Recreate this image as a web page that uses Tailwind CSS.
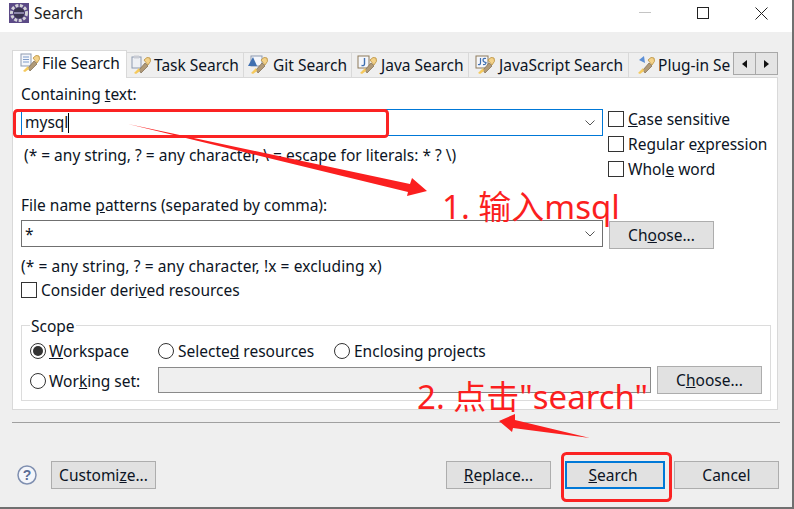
<!DOCTYPE html>
<html lang="en">
<head>
    <meta charset="UTF-8">
    <title>Search</title>
    <script src="https://cdn.jsdelivr.net/npm/@tailwindcss/browser@4"></script>
</head>
<body class="bg-white">
    <svg width="0" height="0" class="absolute">
        <defs>
            <g id="torch">
                <path d="M8 15 L14 8 L17 11 L10 18 Z" fill="#b09a78" stroke="#7d6a4f" stroke-width="0.7"/>
                <path d="M13 5 Q16 1 19 3 Q21 6 17 10 Z" fill="#f3d28a" stroke="#b98f3e" stroke-width="0.8"/>
                <path d="M3 18 L8 13 L9 16 L5 19 Z" fill="#f5c95c"/>
            </g>
        </defs>
    </svg>
    <div class="relative w-[794px] h-[509px] overflow-hidden bg-[#efefef] border-r-2 border-b-2 border-[#707070] text-[15.5px] leading-[20px] text-[#0c1424] font-['Noto_Sans',sans-serif]">
        <!-- title bar -->
        <div class="h-[32px] bg-white flex items-start">
            <svg class="ml-[9px] mt-[3px]" width="20" height="20" viewBox="0 0 20 20">
                <rect width="20" height="20" fill="#5b4a86"/>
                <circle cx="10" cy="10" r="7.5" fill="none" stroke="#d4d4d8" stroke-width="3" stroke-dasharray="3 1.5"/>
                <circle cx="10" cy="10" r="5.5" fill="#3a3550"/>
                <rect x="5" y="9" width="10" height="2" fill="#8a84a8"/>
            </svg>
            <span class="ml-[5px] mt-[3px] text-[#222]">Search</span>
            <div class="ml-auto flex items-start">
                <div class="w-[12px] h-px bg-[#c4c4c4] mt-[12px] mr-[46px]"></div>
                <div class="w-[12px] h-[12px] border border-[#222] mt-[7px] mr-[46px]"></div>
                <svg class="mt-[7px] mr-[24px]" width="13" height="13" viewBox="0 0 13 13"><path d="M0.5 0.5 L12.5 12.5 M12.5 0.5 L0.5 12.5" stroke="#222" stroke-width="1"/></svg>
            </div>
        </div>

        <!-- tabs -->
        <div class="relative z-10 flex items-end h-[45px] pl-[12px]">
            <div class="flex items-center gap-[2px] w-[115px] h-[28px] -mb-px pl-[7px] pb-[3px] bg-white border border-b-0 border-[#d9d9d9]">
                <svg width="20" height="20" viewBox="0 0 20 20"><rect x="1" y="1" width="10" height="12" fill="#f4f6fb" stroke="#8d9ab0"/><path d="M3 4h6M3 6.5h6M3 9h6" stroke="#7f9cc9"/><use href="#torch"/></svg>
                <span>File Search</span>
            </div>
            <div class="flex items-center gap-[3px] w-[117px] h-[26px] -mb-px pl-[4px] border-y border-r border-[#d9d9d9]">
                <svg width="20" height="20" viewBox="0 0 20 20"><rect x="1" y="2" width="9" height="11" fill="#eef0f4" stroke="#8d9ab0"/><rect x="3" y="0.5" width="5" height="3" fill="#c9ccd4"/><use href="#torch"/></svg>
                <span>Task Search</span>
            </div>
            <div class="flex items-center gap-[5px] w-[108px] h-[26px] -mb-px pl-[4px] border-y border-r border-[#d9d9d9]">
                <svg width="20" height="20" viewBox="0 0 20 20"><rect x="3" y="1" width="11" height="10" fill="#f4f6fb" stroke="#8d9ab0"/><path d="M0 11 L5 2 L9 11 Z" fill="#3f6fb0"/><use href="#torch"/></svg>
                <span>Git Search</span>
            </div>
            <div class="flex items-center gap-[4px] w-[117px] h-[26px] -mb-px pl-[5px] border-y border-r border-[#d9d9d9]">
                <svg width="20" height="20" viewBox="0 0 20 20"><rect x="1" y="1" width="11" height="12" fill="#f4f6fb" stroke="#8d7a5a"/><path d="M7.500 3v6q0 2-3 1.500" fill="none" stroke="#3f6fb0" stroke-width="1.400"/><use href="#torch"/></svg>
                <span>Java Search</span>
            </div>
            <div class="flex items-center gap-[4px] w-[160px] h-[26px] -mb-px pl-[6px] border-y border-r border-[#d9d9d9]">
                <svg width="20" height="20" viewBox="0 0 20 20"><rect x="1" y="1" width="12" height="12" fill="#f4f6fb" stroke="#8d7a5a"/><path d="M5.500 3v5q0 2-2.500 1.500M11 3.500Q8 3 8 5t3 2.500q0 2.500-3 2" fill="none" stroke="#3f6fb0" stroke-width="1.200"/><use href="#torch"/></svg>
                <span>JavaScript Search</span>
            </div>
            <div class="flex items-center gap-[3px] w-[104px] h-[26px] -mb-px pl-[6px] border-y border-[#d9d9d9] overflow-hidden whitespace-nowrap">
                <svg class="shrink-0" width="20" height="20" viewBox="0 0 20 20"><path d="M4 5 L9 1 L10 8 Z" fill="#5c8fd6"/><use href="#torch"/></svg>
                <span>Plug-in Se</span>
            </div>
            <div class="flex mb-[2px] h-[23px]">
                <div class="flex items-center justify-center w-[23px] bg-[#e4e4e4] border border-[#a8a8a8]"><svg width="5" height="8" viewBox="0 0 5 8"><path d="M5 0V8L0 4Z" fill="#111"/></svg></div>
                <div class="flex items-center justify-center w-[22px] bg-[#e4e4e4] border border-l-0 border-[#a8a8a8]"><svg width="5" height="8" viewBox="0 0 5 8"><path d="M0 0V8L5 4Z" fill="#111"/></svg></div>
            </div>
        </div>

        <!-- panel -->
        <div class="mx-[12px] w-[766px] h-[333px] bg-white border border-[#d9d9d9] pl-[8px] pr-[6px]">
            <div class="pt-[6px] h-[31px]">Containing <u>t</u>ext:</div>
            <div class="flex h-[86px]">
                <div class="w-[582px]">
                    <div class="h-[27px] border border-[#0078d7] flex items-center justify-between pl-[3px] pr-[7px]">
                        <span class="border-r border-black h-[20px] leading-[19px]">mysql</span>
                        <svg width="10" height="6" viewBox="0 0 10 6"><path d="M0.5 0.500L5 5L9.500 0.500" fill="none" stroke="#555"/></svg>
                    </div>
                    <div class="ml-[3px] mt-[9px]">(* = any string, ? = any character, \ = escape for literals: * ? \)</div>
                </div>
                <div class="ml-[5px] mt-[2px] flex flex-col gap-[9px]">
                    <label class="flex items-center gap-[4px] h-[16px]"><span class="w-[16px] h-[16px] border border-[#333] bg-white"></span><span><u>C</u>ase sensitive</span></label>
                    <label class="flex items-center gap-[4px] h-[16px]"><span class="w-[16px] h-[16px] border border-[#333] bg-white"></span><span>Regular e<u>x</u>pression</span></label>
                    <label class="flex items-center gap-[4px] h-[16px]"><span class="w-[16px] h-[16px] border border-[#333] bg-white"></span><span>Whol<u>e</u> word</span></label>
                </div>
            </div>
            <div class="h-[25px]">File name <u>p</u>atterns (separated by comma):</div>
            <div class="flex">
                <div class="w-[582px] h-[27px] border border-[#707070] flex items-center justify-between pl-[3px] pr-[7px]">
                    <span>*</span>
                    <svg width="10" height="6" viewBox="0 0 10 6"><path d="M0.5 0.500L5 5L9.500 0.500" fill="none" stroke="#555"/></svg>
                </div>
                <button class="ml-[6px] mt-px w-[105px] h-[28px] bg-[#e1e1e1] border border-[#adadad]">Ch<u>o</u>ose...</button>
            </div>
            <div class="mt-[7px] tracking-[0.1px]">(* = any string, ? = any character, !x = excluding x)</div>
            <label class="flex items-center gap-[4px] h-[16px] mt-[6px]"><span class="w-[16px] h-[16px] border border-[#333] bg-white"></span><span>Consider deri<u>v</u>ed resources</span></label>

            <!-- scope group -->
            <div class="relative mt-[27px] w-[750px] h-[76px] border border-[#dcdcdc] pl-[8px] pt-[15px]">
                <span class="absolute left-[8px] -top-[10px] bg-white px-px">Scope</span>
                <div class="flex items-center h-[20px]">
                    <label class="flex items-center gap-[3px] w-[128px]"><span class="flex items-center justify-center w-[16px] h-[16px] rounded-full border border-[#333]"><span class="w-[10px] h-[10px] rounded-full bg-[#333]"></span></span><span><u>W</u>orkspace</span></label>
                    <label class="flex items-center gap-[4px] w-[176px]"><span class="w-[16px] h-[16px] rounded-full border border-[#333]"></span><span>Selecte<u>d</u> resources</span></label>
                    <label class="flex items-center gap-[4px]"><span class="w-[16px] h-[16px] rounded-full border border-[#333]"></span><span>Enclosing projects</span></label>
                </div>
                <div class="flex items-center mt-[5px]">
                    <label class="flex items-center gap-[3px] w-[128px] pt-[2px]"><span class="w-[16px] h-[16px] rounded-full border border-[#333]"></span><span>Wor<u>k</u>ing set:</span></label>
                    <div class="w-[493px] h-[26px] bg-[#efefef] border border-[#8a8a8a]"></div>
                    <button class="ml-[6px] w-[105px] h-[28px] bg-[#e1e1e1] border border-[#adadad]">C<u>h</u>oose...</button>
                </div>
            </div>
        </div>

        <!-- separator -->
        <div class="mx-[12px] mt-[12px] w-[768px] h-px bg-[#a0a0a0]"></div>

        <!-- footer buttons -->
        <div class="flex items-center mt-[38px] pl-[17px]">
            <svg width="20" height="20" viewBox="0 0 20 20"><circle cx="10" cy="10" r="9" fill="#f4f6fb" stroke="#7f8fb0" stroke-width="1.500"/><text x="10" y="15" text-anchor="middle" font-size="14" font-weight="700" fill="#5a6c96" font-family="Liberation Sans">?</text></svg>
            <button class="ml-[14px] w-[105px] h-[28px] bg-[#e1e1e1] border border-[#adadad]">Customi<u>z</u>e...</button>
            <button class="ml-[290px] w-[105px] h-[28px] bg-[#e1e1e1] border border-[#adadad]"><u>R</u>eplace...</button>
            <button class="ml-[14px] w-[100px] h-[28px] pr-[4px] bg-[#e1e1e1] border-2 border-[#0078d7]"><u>S</u>earch</button>
            <button class="ml-[9px] w-[105px] h-[28px] bg-[#e1e1e1] border border-[#adadad]">Cancel</button>
        </div>

        <!-- red annotations drawn over the dialog -->
        <svg class="absolute left-0 top-0 pointer-events-none" width="794" height="509" viewBox="0 0 794 509">
            <rect x="14.500" y="110.500" width="373" height="26" rx="3" fill="none" stroke="#fb2323" stroke-width="3"/>
            <rect x="562.500" y="453.500" width="108" height="47" rx="4" fill="none" stroke="#fb2323" stroke-width="3"/>
            <path d="M128 124 L410 184 L412 178 L427 191 L407 196 L408 192 Z" fill="#fb1f1f"/>
            <path d="M590 438 L515 420 L515 414 L499 421 L512 432 L513 428 Z" fill="#fb1f1f"/>
        </svg>
        <span class="absolute left-[442px] top-[186px] text-[33px] leading-[42px] text-[#fb1f1f] font-['Noto_Sans','Noto_Sans_CJK_SC',sans-serif]">1. 输入msql</span>
        <span class="absolute left-[417px] top-[376px] text-[33px] leading-[42px] text-[#fb1f1f] font-['Noto_Sans','Noto_Sans_CJK_SC',sans-serif]">2. 点击"search"</span>
    </div>
</body>
</html>
